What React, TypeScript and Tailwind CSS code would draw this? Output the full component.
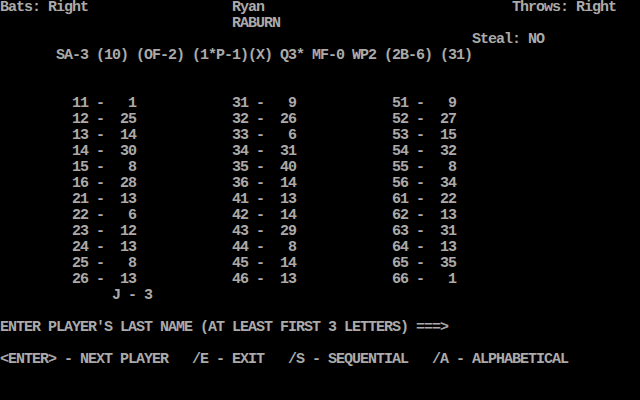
import React from "react";

function at(segs: [number, string][]): string {
  let s = "";
  for (const [col, t] of segs) {
    if (s.length < col) s = s + " ".repeat(col - s.length);
    s = s + t;
  }
  return s;
}

const col1: [string, string][] = [
  ["11", "1"], ["12", "25"], ["13", "14"], ["14", "30"], ["15", "8"], ["16", "28"],
  ["21", "13"], ["22", "6"], ["23", "12"], ["24", "13"], ["25", "8"], ["26", "13"],
];
const col2: [string, string][] = [
  ["31", "9"], ["32", "26"], ["33", "6"], ["34", "31"], ["35", "40"], ["36", "14"],
  ["41", "13"], ["42", "14"], ["43", "29"], ["44", "8"], ["45", "14"], ["46", "13"],
];
const col3: [string, string][] = [
  ["51", "9"], ["52", "27"], ["53", "15"], ["54", "32"], ["55", "8"], ["56", "34"],
  ["61", "22"], ["62", "13"], ["63", "31"], ["64", "13"], ["65", "35"], ["66", "1"],
];

const cell = (p: [string, string]) => p[0] + " - " + p[1].padStart(3, " ");

const lines: string[] = [
  at([[0, "Bats: Right"], [29, "Ryan"], [64, "Throws: Right"]]),
  at([[29, "RABURN"]]),
  at([[59, "Steal: NO"]]),
  at([[7, "SA-3 (10) (OF-2) (1*P-1)(X) Q3* MF-0 WP2 (2B-6) (31)"]]),
  "",
  "",
  ...col1.map((p, i) => at([[9, cell(p)], [29, cell(col2[i])], [49, cell(col3[i])]])),
  at([[14, "J - 3"]]),
  "",
  "ENTER PLAYER'S LAST NAME (AT LEAST FIRST 3 LETTERS) ===>",
  "",
  "<ENTER> - NEXT PLAYER   /E - EXIT   /S - SEQUENTIAL   /A - ALPHABETICAL",
  "",
  "",
];

export default function App() {
  return (
    <div className="w-[640px] h-[400px] bg-black overflow-hidden text-[#aaaaaa] font-['Liberation_Mono',monospace] font-bold text-[15px] tracking-[-1px] leading-[16px]">
      {lines.map((l, i) => (
        <div key={i} className="h-4 whitespace-pre">
          {l}
        </div>
      ))}
    </div>
  );
}
